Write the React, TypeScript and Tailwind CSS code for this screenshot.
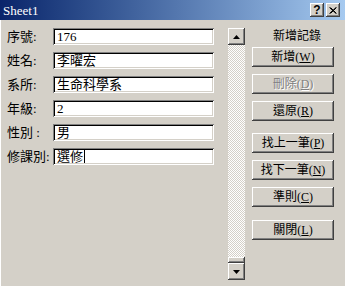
import React from "react";

const FONT = "'Liberation Serif','Noto Sans CJK TC',serif";

const raised =
  "shadow-[inset_-1px_-1px_#404040,inset_1px_1px_#ffffff,inset_-2px_-2px_#808080,inset_2px_2px_#d4d0c8]";
const sunken =
  "shadow-[inset_1px_1px_#808080,inset_-1px_-1px_#ffffff,inset_2px_2px_#000000,inset_-2px_-2px_#d4d0c8]";

function Field({ label, value, cursor }: { label: string; value: string; cursor?: boolean }) {
  return (
    <div className="flex items-center h-[17px]">
      <div className="w-[46px] text-[13px] leading-none text-black whitespace-nowrap">{label}</div>
      <div className={`w-[161px] h-[17px] bg-white ${sunken} flex items-center pl-[4px] text-[13px] leading-none text-black`}>
        <span>{value}</span>
        {cursor && <span className="inline-block w-[1px] h-[13px] bg-black ml-[1px]" />}
      </div>
    </div>
  );
}

function Btn({ children, disabled, className = "" }: { children: React.ReactNode; disabled?: boolean; className?: string }) {
  return (
    <div
      className={`h-[20px] w-[82px] ${raised} bg-[#d4d0c8] flex items-center justify-center text-[12px] leading-none ${
        disabled ? "text-[#808080] [text-shadow:1px_1px_#ffffff]" : "text-black"
      } ${className}`}
    >
      {children}
    </div>
  );
}

export default function App() {
  return (
    <div className="w-[345px] h-[286px] bg-[#d4d0c8] flex flex-col overflow-hidden" style={{ fontFamily: FONT }}>
      <div className="h-[20px] flex items-center bg-gradient-to-r from-[#0a246a] to-[#a6caf0] pl-[3px] pr-[5px]">
        <span className="flex-1 text-white text-[13px] leading-none">Sheet1</span>
        <div className="flex gap-[2px]">
          <div className={`w-[14px] h-[14px] bg-[#d4d0c8] ${raised} flex items-center justify-center text-[12px] font-bold leading-none text-black`} style={{ fontFamily: "'Liberation Sans',sans-serif" }}>
            ?
          </div>
          <div className={`w-[14px] h-[14px] bg-[#d4d0c8] ${raised} flex items-center justify-center`}>
            <svg width="8" height="7" viewBox="0 0 8 7">
              <path d="M0.5 0.5 L7 6.5 M1.5 0.5 L7.5 6.5 M7 0.5 L0.5 6.5 M7.5 0.5 L1.5 6.5" stroke="#000" strokeWidth="1" />
            </svg>
          </div>
        </div>
      </div>
      <div className="flex flex-1 pt-[8px] border-l border-white">
        <div className="flex flex-col gap-[7px] pl-[6px]">
          <Field label="序號:" value="176" />
          <Field label="姓名:" value="李曜宏" />
          <Field label="系所:" value="生命科學系" />
          <Field label="年級:" value="2" />
          <Field label="性別 :" value="男" />
          <Field label="修課別:" value="選修" cursor />
        </div>
        <div className="ml-[14px] w-[17px] h-[252px] flex flex-col">
          <div className={`h-[17px] bg-[#d4d0c8] ${raised} flex items-center justify-center`}>
            <svg width="7" height="4" viewBox="0 0 7 4">
              <path d="M3.5 0 L7 4 L0 4 Z" fill="#000" />
            </svg>
          </div>
          <div className="flex-1 bg-[repeating-conic-gradient(#d4d0c8_0%_25%,#ffffff_0%_50%)] bg-[length:2px_2px]" />
          <div className={`h-[6px] bg-[#d4d0c8] ${raised}`} />
          <div className={`h-[17px] bg-[#d4d0c8] ${raised} flex items-center justify-center`}>
            <svg width="7" height="4" viewBox="0 0 7 4">
              <path d="M0 0 L7 0 L3.5 4 Z" fill="#000" />
            </svg>
          </div>
        </div>
        <div className="ml-[7px] w-[82px] flex flex-col">
          <div className="h-[16px] flex items-center justify-center pl-[8px] text-[12px] leading-none text-black">新增記錄</div>
          <Btn className="mt-[3px]">
            新增(<u>W</u>)
          </Btn>
          <Btn disabled className="mt-[7px]">
            刪除(<u>D</u>)
          </Btn>
          <Btn className="mt-[7px]">
            還原(<u>R</u>)
          </Btn>
          <Btn className="mt-[12px]">
            找上一筆(<u>P</u>)
          </Btn>
          <Btn className="mt-[7px]">
            找下一筆(<u>N</u>)
          </Btn>
          <Btn className="mt-[7px]">
            準則(<u>C</u>)
          </Btn>
          <Btn className="mt-[13px]">
            關閉(<u>L</u>)
          </Btn>
        </div>
      </div>
    </div>
  );
}
